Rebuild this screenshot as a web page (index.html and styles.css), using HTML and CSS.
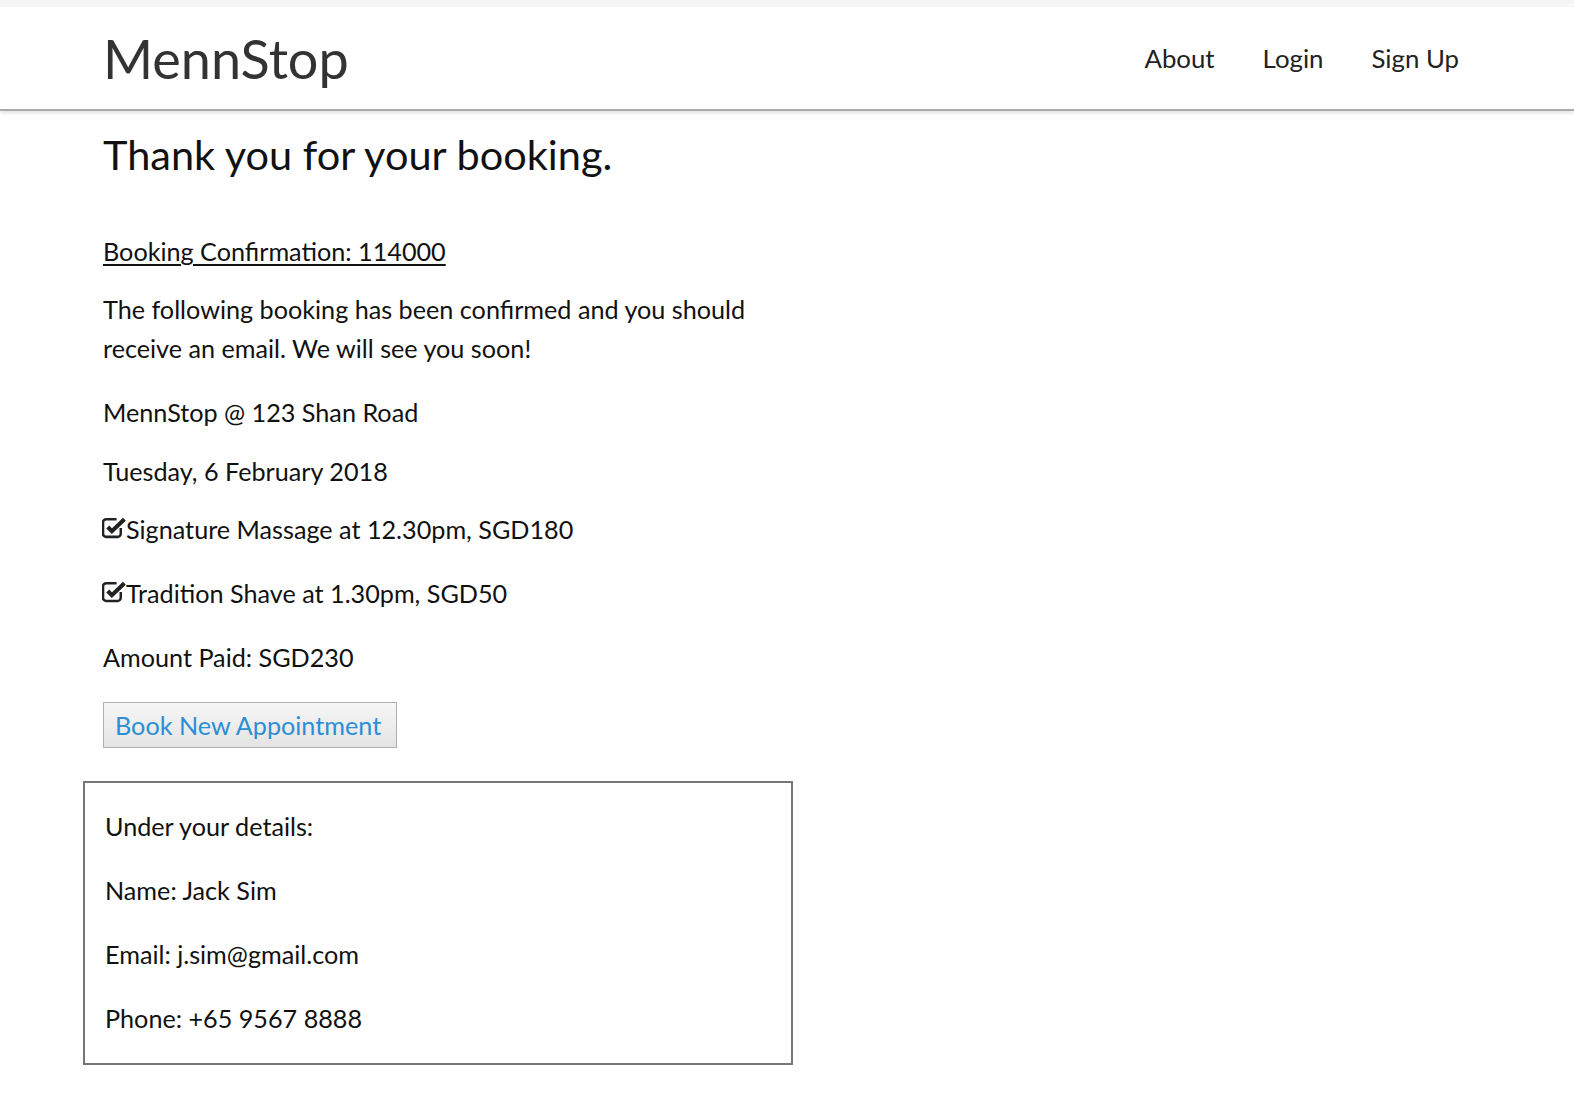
FILE: index.html
```html
<!DOCTYPE html>
<html lang="en">
<head>
<meta charset="utf-8">
<title>MennStop - Booking Confirmed</title>
<link rel="stylesheet" href="styles.css">
</head>
<body>
<div class="topstrip"></div>
<header class="header">
  <div class="brand">MennStop</div>
  <nav class="nav">
    <a href="#">About</a>
    <a href="#">Login</a>
    <a href="#">Sign Up</a>
  </nav>
</header>
<main class="main">
  <h1 class="title">Thank you for your booking.</h1>
  <div class="content">
    <p class="conf">Booking Confirmation: 114000</p>
    <p class="intro">The following booking has been confirmed and you should receive an email. We will see you soon!</p>
    <p class="line">MennStop @ 123 Shan Road</p>
    <p class="line">Tuesday, 6 February 2018</p>
    <p class="item item-first"><svg class="chk" viewBox="0 0 24 24" width="25" height="25"><path d="M18 12.5V18a3 3 0 0 1-3 3H4a3 3 0 0 1-3-3V7a3 3 0 0 1 3-3h10" fill="none" stroke="#222" stroke-width="2.4"/><path d="M5.5 11.5l4 4L21.5 4" fill="none" stroke="#222" stroke-width="4" stroke-linejoin="miter"/></svg>Signature Massage at 12.30pm, SGD180</p>
    <p class="item"><svg class="chk" viewBox="0 0 24 24" width="25" height="25"><path d="M18 12.5V18a3 3 0 0 1-3 3H4a3 3 0 0 1-3-3V7a3 3 0 0 1 3-3h10" fill="none" stroke="#222" stroke-width="2.4"/><path d="M5.5 11.5l4 4L21.5 4" fill="none" stroke="#222" stroke-width="4" stroke-linejoin="miter"/></svg>Tradition Shave at 1.30pm, SGD50</p>
    <p class="line amount">Amount Paid: SGD230</p>
    <button class="btn" type="button">Book New Appointment</button>
  </div>
  <section class="details">
    <p>Under your details:</p>
    <p>Name: Jack Sim</p>
    <p>Email: j.sim@gmail.com</p>
    <p>Phone: +65 9567 8888</p>
  </section>
</main>
</body>
</html>
```
FILE: styles.css
```css
html, body {
  margin: 0;
  padding: 0;
  background: #fff;
}
body {
  font-family: Lato, "Open Sans", "Liberation Sans", sans-serif;
  color: #111;
}
.topstrip {
  height: 7px;
  background: linear-gradient(#f3f3f3, #fafafa);
}
.header {
  display: flex;
  align-items: center;
  justify-content: space-between;
  height: 102px;
  padding: 0 115px 0 103px;
  border-bottom: 2px solid #aaa;
  box-shadow: 0 2px 4px rgba(0,0,0,0.12);
}
.brand {
  font-size: 54px;
  color: #333;
  line-height: 1;
  margin-top: 2px;
}
.nav {
  display: flex;
  gap: 48px;
}
.nav a {
  font-size: 25.8px;
  color: #222;
  text-decoration: none;
}
.main {
  padding: 0 0 40px 103px;
}
.title {
  font-weight: 400;
  font-size: 41.5px;
  margin: 19px 0 0;
  line-height: 48px;
  color: #111;
}
.content {
  width: 690px;
  margin-top: 58px;
  font-size: 25.2px;
}
.content p {
  margin: 0;
}
.conf {
  text-decoration: underline;
  text-decoration-thickness: 1.5px;
  text-underline-offset: 3px;
  line-height: 30px;
}
.intro {
  line-height: 39px;
  padding-top: 24px;
}
.line {
  line-height: 30px;
  padding-top: 29px;
}
.item {
  display: flex;
  align-items: center;
  line-height: 30px;
  padding-top: 34px;
}
.item-first {
  padding-top: 28px;
}
.chk {
  margin: -3px -1px 0 -1px;
  flex: none;
}
.amount {
  padding-top: 34px;
}
.btn {
  display: block;
  margin-top: 30px;
  font-family: inherit;
  font-size: 25.2px;
  color: #2b8fd6;
  background: linear-gradient(#f6f6f6, #e4e4e4);
  border: 1.5px solid #b0b0b0;
  padding: 0 11px;
  height: 46px;
  width: 294px;
  text-align: left;
  white-space: nowrap;
}
.details {
  margin: 33px 0 0 -20px;
  width: 666px;
  border: 2px solid #777;
  padding: 28px 20px 30px 20px;
  font-size: 25.2px;
}
.details p {
  margin: 0 0 34px;
  line-height: 30px;
}
.details p:last-child {
  margin-bottom: 0;
}
```
